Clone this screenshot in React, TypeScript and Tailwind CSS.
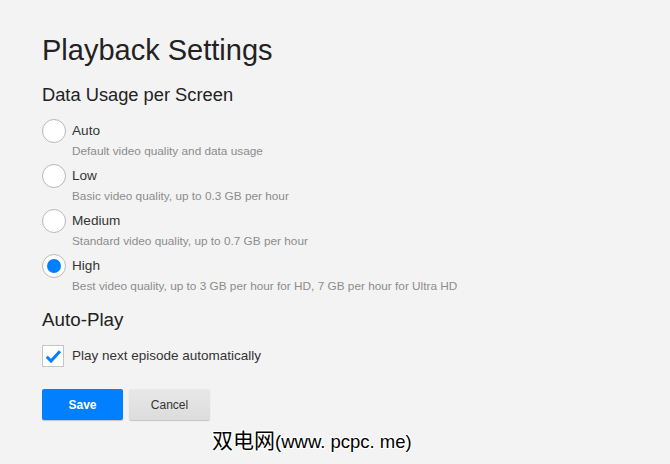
import React from "react";

const options = [
  { label: "Auto", desc: "Default video quality and data usage", checked: false },
  { label: "Low", desc: "Basic video quality, up to 0.3 GB per hour", checked: false },
  { label: "Medium", desc: "Standard video quality, up to 0.7 GB per hour", checked: false },
  {
    label: "High",
    desc: "Best video quality, up to 3 GB per hour for HD, 7 GB per hour for Ultra HD",
    checked: true,
  },
];

export default function App() {
  return (
    <div
      className="relative w-[670px] h-[464px] overflow-hidden bg-[#f3f3f3] pl-[42px] pt-[33px] flex flex-col"
      style={{ fontFamily: '"Liberation Sans", Arial, sans-serif' }}
    >
      <h1 className="text-[29px] leading-[34px] text-[#222] font-normal">Playback Settings</h1>
      <h2 className="mt-[17px] text-[18.3px] leading-[22px] text-[#222] font-normal">
        Data Usage per Screen
      </h2>
      <div className="mt-[13px] flex flex-col gap-[5px]">
        {options.map((o) => (
          <div key={o.label} className="flex flex-col">
            <div className="flex items-center gap-[6px] h-[24px]">
              <div className="w-[24px] h-[24px] rounded-full bg-white border border-[#b8b8b8] flex items-center justify-center">
                {o.checked && <div className="w-[14px] h-[14px] rounded-full bg-[#0080ff]" />}
              </div>
              <span className="text-[13.6px] text-[#333]">{o.label}</span>
            </div>
            <div className="ml-[30px] h-[16px] leading-[16px] text-[11.8px] text-[#8c8c8c]">{o.desc}</div>
          </div>
        ))}
      </div>
      <h2 className="mt-[15px] text-[18.8px] leading-[22px] text-[#222] font-normal">Auto-Play</h2>
      <div className="mt-[14px] flex items-center gap-[8px] h-[22px]">
        <div className="w-[22px] h-[22px] bg-white border border-[#c4c4c4] flex items-center justify-center">
          <svg width="17" height="15" viewBox="0 0 17 15">
            <path d="M1.8 7.8 L6 12 L15 2.2" fill="none" stroke="#0080ff" strokeWidth="3" strokeLinecap="butt" />
          </svg>
        </div>
        <span className="text-[13.5px] text-[#333]">Play next episode automatically</span>
      </div>
      <div className="mt-[22px] flex gap-[6px]">
        <button className="w-[81px] h-[31px] rounded-[2px] bg-[#0080ff] text-white text-[12px] font-bold shadow-[0_1px_1px_rgba(0,0,0,0.2)]">
          Save
        </button>
        <button className="w-[81px] h-[31px] rounded-[2px] bg-gradient-to-b from-[#e8e8e8] to-[#dcdcdc] text-[#333] text-[12px] shadow-[0_1px_1px_rgba(0,0,0,0.2)]">
          Cancel
        </button>
      </div>
      <div
        className="absolute left-[212px] top-[429px] flex items-baseline leading-[24px] text-black [text-shadow:1px_0_0_#fff,-1px_0_0_#fff,0_1px_0_#fff,0_-1px_0_#fff,1px_1px_0_#fff,-1px_-1px_0_#fff,1px_-1px_0_#fff,-1px_1px_0_#fff]"
        style={{ fontFamily: '"Liberation Sans", "Noto Sans CJK SC", sans-serif' }}
      >
        <span className="text-[21px]">双电网</span>
        <span className="text-[18.5px]">(www. pcpc. me)</span>
      </div>
    </div>
  );
}
